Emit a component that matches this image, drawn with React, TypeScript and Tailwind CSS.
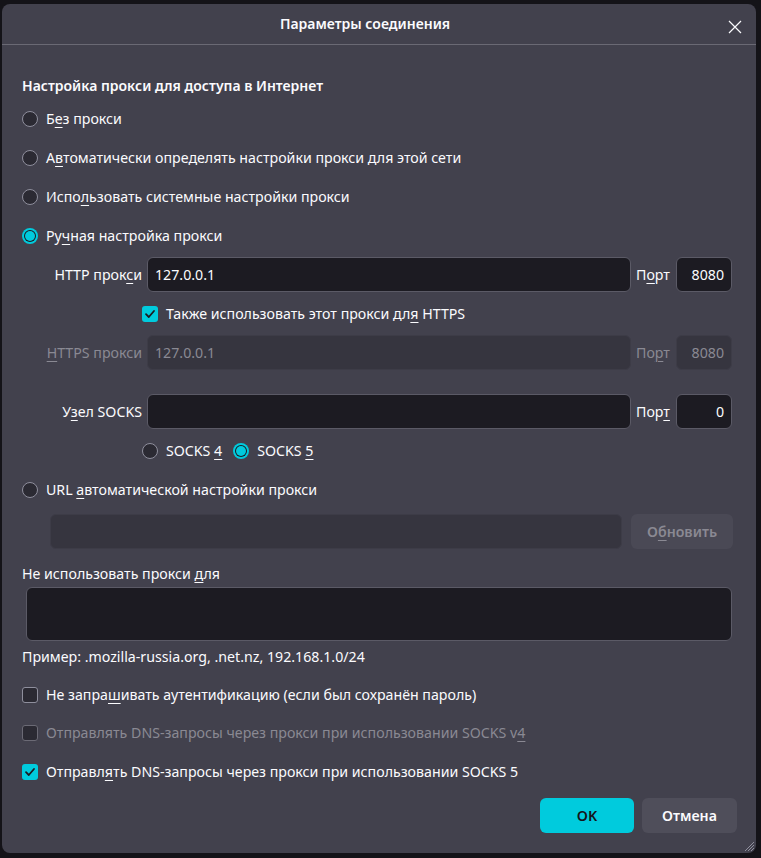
import React from 'react';

const FONT = { fontFamily: '"Noto Sans", "Open Sans", sans-serif' };

const U: React.FC<{ children: React.ReactNode }> = ({ children }) => (
  <span className="underline underline-offset-[3px] decoration-1">{children}</span>
);

const Radio: React.FC<{ checked?: boolean; className?: string }> = ({ checked, className }) =>
  checked ? (
    <span className={`flex h-[16px] w-[16px] shrink-0 rounded-full bg-[#00cbdd] p-[2px] ${className ?? ''}`}>
      <span className="flex flex-1 rounded-full bg-[#1c1b22] p-[1px]">
        <span className="flex-1 rounded-full bg-[#00cbdd]" />
      </span>
    </span>
  ) : (
    <span className={`h-[16px] w-[16px] shrink-0 rounded-full border border-[#8f8f9d] bg-[#2b2a33] ${className ?? ''}`} />
  );

const Check: React.FC<{ checked?: boolean; disabled?: boolean }> = ({ checked, disabled }) =>
  checked ? (
    <span className="flex h-[16px] w-[16px] shrink-0 items-center justify-center rounded-[3px] bg-[#00cbdd]">
      <svg width="12" height="12" viewBox="0 0 12 12" fill="none">
        <path d="M2 6.2 L4.8 9 L10 3" stroke="#1c1b22" strokeWidth="1.8" strokeLinecap="round" strokeLinejoin="round" />
      </svg>
    </span>
  ) : (
    <span
      className={`h-[16px] w-[16px] shrink-0 rounded-[3px] border bg-[#2b2a33] ${
        disabled ? 'border-[#6b6a75]' : 'border-[#8f8f9d]'
      }`}
    />
  );

const Input: React.FC<{ value?: string; disabled?: boolean; className?: string; right?: boolean }> = ({
  value,
  disabled,
  className,
  right,
}) => (
  <div
    className={`flex h-[35px] items-center rounded-[6px] border px-[7px] text-[14.2px] ${
      disabled ? 'border-[#3d3c47] bg-[#36353f] text-[#8a8993]' : 'border-[#5b5a66] bg-[#1c1b22] text-[#fbfbfe]'
    } ${right ? 'justify-end' : ''} ${className ?? ''}`}
  >
    {value}
  </div>
);

const Row: React.FC<{ children: React.ReactNode; className?: string }> = ({ children, className }) => (
  <div className={`flex h-[20px] items-center gap-[8px] ${className ?? ''}`}>{children}</div>
);

const ProxyRow: React.FC<{ label: React.ReactNode; value?: string; port: string; portLabel: React.ReactNode; disabled?: boolean; className?: string }> = ({
  label,
  value,
  port,
  portLabel,
  disabled,
  className,
}) => (
  <div className={`flex items-center ${className ?? ''} ${disabled ? 'text-[#8a8993]' : ''}`}>
    <div className="w-[120px] text-right">{label}</div>
    <Input value={value} disabled={disabled} className="ml-[5px] w-[484px]" />
    <div className="ml-[5px] w-[35px]">{portLabel}</div>
    <Input value={port} disabled={disabled} right className="ml-[5px] w-[56px]" />
  </div>
);

export default function App() {
  return (
    <div className="min-h-[858px] bg-[#141318] pl-[2px] pt-[4px] text-[14.2px] text-[#fbfbfe]" style={FONT}>
      <div className="relative flex h-[849px] w-[754px] flex-col rounded-[8px] bg-[#42414d]">
        <div className="relative flex h-[41px] shrink-0 items-center justify-center border-b border-[#6a6974] pb-[2px] pr-[28px]">
          <span className="text-[14px] font-semibold">Параметры соединения</span>
          <svg className="absolute right-[14px] top-[16px]" width="14" height="14" viewBox="0 0 14 14">
            <path d="M1 1 L13 13 M13 1 L1 13" stroke="#fbfbfe" strokeWidth="1.2" />
          </svg>
        </div>

        <div className="flex flex-col pl-[20px] pt-[31px]">
          <div className="h-[20px] text-[14px] font-semibold leading-[20px]">Настройка прокси для доступа в Интернет</div>

          <Row className="mt-[13px]">
            <Radio />
            <span>Б<U>е</U>з прокси</span>
          </Row>
          <Row className="mt-[19px]">
            <Radio />
            <span>А<U>в</U>томатически определять настройки прокси для этой сети</span>
          </Row>
          <Row className="mt-[19px]">
            <Radio />
            <span>Испо<U>л</U>ьзовать системные настройки прокси</span>
          </Row>
          <Row className="mt-[19px]">
            <Radio checked />
            <span>Ру<U>ч</U>ная настройка прокси</span>
          </Row>

          <ProxyRow
            className="mt-[11px]"
            label={<>HTTP прок<U>с</U>и</>}
            value="127.0.0.1"
            portLabel={<>П<U>о</U>рт</>}
            port="8080"
          />

          <Row className="mt-[12px] pl-[120px]">
            <Check checked />
            <span>Также использовать этот прокси дл<U>я</U> HTTPS</span>
          </Row>

          <ProxyRow
            className="mt-[11px]"
            disabled
            label={<><U>H</U>TTPS прокси</>}
            value="127.0.0.1"
            portLabel={<>По<U>р</U>т</>}
            port="8080"
          />

          <ProxyRow
            className="mt-[24px]"
            label={<>У<U>з</U>ел SOCKS</>}
            value=""
            portLabel={<>Пор<U>т</U></>}
            port="0"
          />

          <Row className="mt-[12px] pl-[120px]">
            <Radio />
            <span>SOCKS <U>4</U></span>
            <Radio checked className="ml-[3px]" />
            <span>SOCKS <U>5</U></span>
          </Row>

          <Row className="mt-[19px]">
            <Radio />
            <span>URL <U>а</U>втоматической настройки прокси</span>
          </Row>

          <div className="mt-[14px] flex items-center pl-[28px]">
            <Input disabled className="w-[572px]" />
            <div className="ml-[9px] flex h-[35px] w-[102px] items-center justify-center rounded-[6px] bg-[#4a4955] font-semibold text-[#8a8993]">
              О<U>б</U>новить
            </div>
          </div>

          <div className="mt-[15px] h-[20px] leading-[20px]">
            Не использовать прокси <U>д</U>ля
          </div>
          <div className="ml-[4px] mt-[3px] h-[54px] w-[706px] rounded-[6px] border border-[#5b5a66] bg-[#1c1b22]" />
          <div className="mt-[6px] h-[20px] leading-[20px]">Пример: .mozilla-russia.org, .net.nz, 192.168.1.0/24</div>

          <Row className="mt-[18px]">
            <Check />
            <span>Не запра<U>ш</U>ивать аутентификацию (если был сохранён пароль)</span>
          </Row>
          <Row className="mt-[18px] text-[#8a8993]">
            <Check disabled />
            <span>Отправлять DNS-запросы через прокси при использовании SOCKS v<U>4</U></span>
          </Row>
          <Row className="mt-[19px]">
            <Check checked />
            <span>Отправл<U>я</U>ть DNS-запросы через прокси при использовании SOCKS 5</span>
          </Row>

          <div className="mt-[16px] flex justify-end gap-[8px] pr-[19px]">
            <div className="flex h-[35px] w-[94px] items-center justify-center rounded-[6px] bg-[#00cbdd] font-semibold text-[#15141a]">
              OK
            </div>
            <div className="flex h-[35px] w-[95px] items-center justify-center rounded-[6px] bg-[#4f4e5a] font-semibold">
              Отмена
            </div>
          </div>
        </div>

        <svg className="absolute bottom-[1px] right-[1px]" width="13" height="13" viewBox="0 0 13 13">
          <path d="M12 3 L3 12 M12 6 L6 12 M12 9 L9 12" stroke="#8f8f9d" strokeWidth="1" />
        </svg>
      </div>
    </div>
  );
}
